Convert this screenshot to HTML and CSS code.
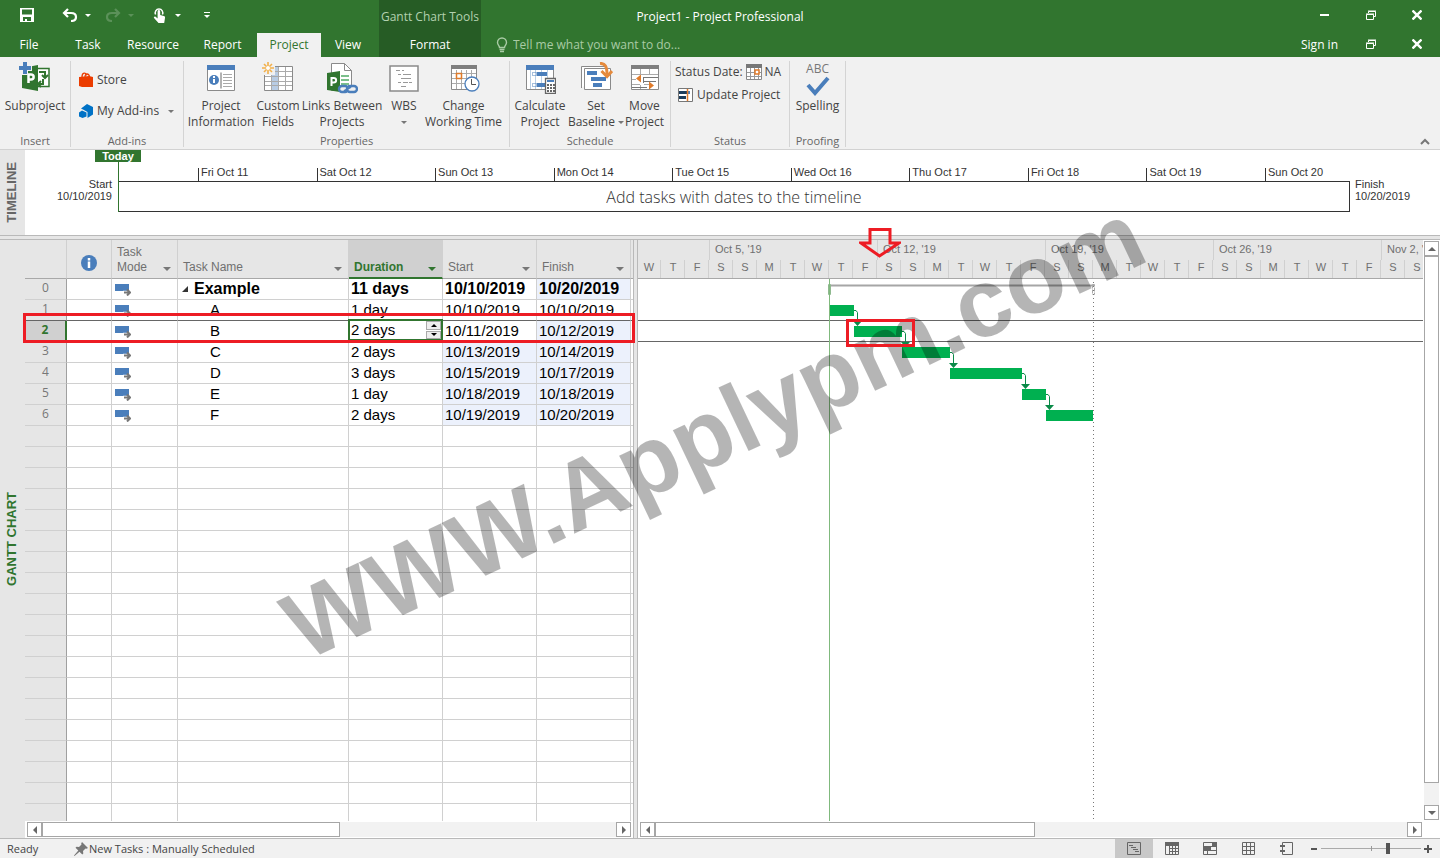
FILE: index.html
```html
<!DOCTYPE html>
<html lang="en">
<head>
<meta charset="utf-8">
<title>Project1 - Project Professional</title>
<link rel="stylesheet" href="styles.css">
</head>
<body>
<header class="titlebar">
  <div class="title-left">
    <div class="qat">
      <button class="qbtn save" aria-label="Save"><svg width="14" height="14" viewBox="0 0 14 14"><path fill="#fff" fill-rule="evenodd" d="M0 0h14v14H0zM2 1.500v5h10v-5zM3 9v4h2v-2h2v2h4V9z"/></svg></button>
      <button class="qbtn undo" aria-label="Undo"><svg width="16" height="14" viewBox="0 0 16 14"><path fill="none" stroke="#fff" stroke-width="2.200" d="M6 1 2 5l4 4M2.500 5H9c3 0 5 1.200 5 4s-2 4-5 4"/></svg></button>
      <button class="qcaret" aria-label="Undo history"><i class="caret light"></i></button>
      <button class="qbtn redo" aria-label="Redo"><svg width="16" height="14" viewBox="0 0 16 14"><path fill="none" stroke="#5b9159" stroke-width="2.200" d="m10 1 4 4-4 4M13.500 5H7C4 5 2 6.200 2 9s2 4 5 4"/></svg></button>
      <button class="qcaret" aria-label="Redo history"><i class="caret faint"></i></button>
      <button class="qbtn touch" aria-label="Touch mode"><svg width="14" height="17" viewBox="0 0 14 17"><path fill="none" stroke="#fff" stroke-width="1.500" d="M2.600 7.500a3.800 3.800 0 1 1 6.800 0"/><path fill="#fff" d="M4.600 4.500c0-2 2.600-2 2.600 0V8l3.600 1c1.200.4 1.400 1 1.200 2l-.8 5H5.500L1 11c-.5-1 .6-2 1.600-1.200l2 1.600z"/></svg></button>
      <button class="qcaret" aria-label="Touch options"><i class="caret light"></i></button>
      <button class="qbtn custom" aria-label="Customize toolbar"><i class="bar"></i><i class="caret light"></i></button>
    </div>
    <div class="context-title">Gantt Chart Tools</div>
  </div>
  <h1 class="title">Project1 - Project Professional</h1>
  <div class="win-controls">
    <button aria-label="Minimize"><svg width="10" height="10"><path stroke="#fff" stroke-width="2" d="M0 5h9"/></svg></button>
    <button aria-label="Restore"><svg width="10" height="10"><path fill="none" stroke="#fff" d="M.5 4.500h7v5h-7zM2.500 3V1.500h7v5H8M2 1h8M0 4h8"/></svg></button>
    <button aria-label="Close"><svg width="10" height="10"><path stroke="#fff" stroke-width="2.400" d="m.5.5 9 9m0-9-9 9"/></svg></button>
  </div>
</header>
<nav class="tabs">
  <a class="tab w-file" href="#file">File</a>
  <a class="tab w-task" href="#task">Task</a>
  <a class="tab w-resource" href="#resource">Resource</a>
  <a class="tab w-report" href="#report">Report</a>
  <a class="tab w-project active" href="#project">Project</a>
  <a class="tab w-view" href="#view">View</a>
  <a class="tab w-format" href="#format">Format</a>
  <label class="tell"><svg width="12" height="16" viewBox="0 0 12 16"><path fill="none" stroke="#a9cba5" stroke-width="1.400" d="M3.500 10.500C3.500 8.500 1.500 8 1.500 5.500a4.500 4.500 0 0 1 9 0c0 2.500-2 3-2 5zM3.500 12.500h5M4 14.500h4"/></svg>
    <input type="text" aria-label="Tell me what you want to do" placeholder="Tell me what you want to do..."></label>
  <a class="signin" href="#signin">Sign in</a>
  <div class="win-controls">
    <button aria-label="Restore document"><svg width="10" height="10"><path fill="none" stroke="#fff" d="M.5 4.500h7v5h-7zM2.500 3V1.500h7v5H8M2 1h8M0 4h8"/></svg></button>
    <button aria-label="Close document"><svg width="10" height="10"><path stroke="#fff" stroke-width="2.400" d="m.5.5 9 9m0-9-9 9"/></svg></button>
  </div>
</nav>
<section class="ribbon">
  <div class="group g-insert">
    <div class="items"><button class="big">
      <svg width="32" height="32" viewBox="0 0 32 32"><path fill="#fff" stroke="#31752f" stroke-width="1.500" d="M16 6.500h14v18H16z"/><path fill="none" stroke="#31752f" stroke-width="2" d="M20 10h6v5m-3-2 3 3 3-3M24 17v5h-4m2-3-3 3 3 3"/><path fill="#31752f" d="m3 6 16-3v26L3 26z"/><path fill="none" stroke="#fff" stroke-width="2.500" d="M9.500 21v-8.500H12c3.500 0 3.500 5 0 5h-2"/><path fill="#f1f1f1" d="M3 0h6v3h4v6H9v4H3z"/><path fill="#4a7ebb" d="M4 0h4v4h4v4H8v4H4V8H0V4h4z"/></svg>
      <span>Subproject</span></button></div>
    <h2>Insert</h2>
  </div>
  <div class="group g-addins">
    <div class="items stack">
      <button class="small"><svg width="16" height="16" viewBox="0 0 16 16"><path fill="none" stroke="#eb3c00" stroke-width="1.300" d="M4 5c0-5 4-5 4.500-1.500M7 5c0-4 4-4 4.500 0"/><path fill="#eb3c00" d="m1 5 10-1 4 1v10H4l-3-1z"/></svg><span>Store</span></button>
      <button class="small"><svg width="16" height="16" viewBox="0 0 16 16"><path fill="#0072c6" d="M3 5.500 9 1l6 3v7.500L9.500 15V9L5 6.500z"/><path fill="#0072c6" d="m4 7.500 4.500 2v4L4.500 15 1 13.500v-4z"/></svg><span>My Add-ins</span><i class="caret"></i></button>
    </div>
    <h2>Add-ins</h2>
  </div>
  <div class="group g-props">
    <div class="items">
      <button class="big">
        <svg width="32" height="32" viewBox="0 0 32 32"><path fill="#fff" stroke="#8a8a8a" d="M2.500 4.500h27v24h-27z"/><path fill="#4a7ebb" d="M2 3h28v5H2z"/><circle cx="9" cy="18" r="5" fill="#4a7ebb"/><path stroke="#fff" stroke-width="2" d="M9 14v2m0 1v4"/><path stroke="#666" d="M16 10.500v16"/><path stroke="#aaa" d="M18 12.500h9m-9 3h9m-9 3h9m-9 3h9m-9 3h9"/></svg>
        <span>Project<br>Information</span></button>
      <button class="big">
        <svg width="32" height="32" viewBox="0 0 32 32"><path fill="#fff" stroke="#8a8a8a" d="M2.500 4.500h28v24h-28z"/><path fill="#b8cce4" d="M9 5h8v23H9z"/><path stroke="#aaa" d="M3 9.500h27m-27 5h27m-27 5h27m-27 4h27M9.500 5v23m7-23v23m7-23v23"/><path fill="#f1f1f1" d="M0 0h13v13H0z"/><path stroke="#f2b04a" stroke-width="1.600" d="M6 0v12M0 6h12M2 2l8 8m0-8-8 8"/><circle cx="6" cy="6" r="2" fill="#fff"/></svg>
        <span>Custom<br>Fields</span></button>
      <button class="big">
        <svg width="32" height="32" viewBox="0 0 32 32"><path fill="#fff" stroke="#8a8a8a" d="M5.500 1.500h13l7 7v20h-20z"/><path fill="none" stroke="#8a8a8a" d="M18.500 1.500v7h7"/><path stroke="#7bbf8b" stroke-width="2" d="M15 14h8m-8 4h8m-8 4h8"/><path fill="#31752f" d="m1 11 13-2v21L1 28z"/><path fill="none" stroke="#fff" stroke-width="2" d="M5.500 24v-8h2c3.500 0 3.500 4.500 0 4.500h-2"/><g fill="#f1f1f1" stroke="#4a7ebb" stroke-width="2.400"><rect x="13" y="24" width="9" height="6" rx="3"/><rect x="21" y="24" width="10" height="6" rx="3"/></g><path stroke="#4a7ebb" stroke-width="2" d="m18 29 7-4"/></svg>
        <span>Links Between<br>Projects</span></button>
      <button class="big">
        <svg width="32" height="32" viewBox="0 0 32 32"><path fill="#fff" stroke="#8a8a8a" stroke-width="1.500" d="M2 4h28v25H2z"/><path stroke="#999" d="M8 8.500h4m2 0h2M10 12.500h3m2 0h8M13 16.500h10M10 20.500h3m2 0h5m1 0h3M13 24.500h5"/></svg>
        <span>WBS<br><i class="caret"></i></span></button>
      <button class="big">
        <svg width="32" height="32" viewBox="0 0 32 32"><path fill="#fff" stroke="#8a8a8a" d="M3.500 4.500h25v23h-25z"/><path fill="#7f7f7f" d="M3 3h26v4H3z"/><path stroke="#aaa" d="M4 11.500h24m-24 5h24m-24 5h24M8.500 8v19m5-19v19m5-19v19m5-19v19"/><path fill="#fff" stroke="#e07b2a" stroke-width="1.500" d="M8.500 11.500h5v5h-5z"/><circle cx="24" cy="22" r="7" fill="#fff" stroke="#4a7ebb" stroke-width="1.300"/><path fill="none" stroke="#555" d="M23.500 17v5.500H28"/></svg>
        <span>Change<br>Working Time</span></button>
    </div>
    <h2>Properties</h2>
  </div>
  <div class="group g-sched">
    <div class="items">
      <button class="big">
        <svg width="32" height="32" viewBox="0 0 32 32"><path fill="#fff" stroke="#8a8a8a" d="M2.500 4.500h27v23h-27z"/><path fill="#4a7ebb" d="M2 3h28v5H2z"/><path stroke="#b9cfe6" d="M6.500 8v19m5-19v19m6-19v19m6-19v19"/><path fill="#4a7ebb" d="M13 10h10v4H13zM13 21h8v4h-8z"/><path fill="none" stroke="#4a7ebb" stroke-dasharray="1 1" d="M8.500 10.500h4v3h-4zm0 11h4v3h-4z"/><path fill="#fff" stroke="#666" stroke-width="1.300" d="M21.500 16.500h10v15h-10z"/><path fill="#4a7ebb" d="M23 18h7v2h-7z"/><path stroke="#666" stroke-width="2" stroke-dasharray="2 1" d="M23 23h8m-8 3h8m-8 3h8"/></svg>
        <span>Calculate<br>Project</span></button>
      <button class="big">
        <svg width="34" height="32" viewBox="0 0 34 32"><path fill="#fff" stroke="#8a8a8a" d="M2.500 26V4.500H26"/><path fill="#fff" stroke="#8a8a8a" d="M5.500 6.500h26v21h-26z"/><path fill="#4a7ebb" d="M8 9h10v4H8zm4 6h15v4H12zm2 6h9v4h-9z"/><path fill="none" stroke="#e58a3c" stroke-width="3" d="M21 1.500c5-.5 7 3 7 11"/><path fill="none" stroke="#e58a3c" stroke-width="3" d="m22.500 9 5.500 5.500L33 9"/></svg>
        <span>Set<br>Baseline <i class="caret"></i></span></button>
      <button class="big">
        <svg width="32" height="32" viewBox="0 0 32 32"><path fill="#fff" stroke="#8a8a8a" d="M2.500 4.500h27v23h-27z"/><path fill="#7f7f7f" d="M2 3h28v4H2z"/><path stroke="#aaa" d="M3 12.500h26m-26 10h8m4 0h6M11.500 7v6m9-6v6m-9 10v4m9-4v4M3 17.500h4"/><path stroke="#777" d="M14 15.500h15M14.500 15v6M14 19.500h13M3 25.500h15"/><path fill="#e07b2a" d="m7 16.500 5-4v8zm18 7-5-4v8z"/></svg>
        <span>Move<br>Project</span></button>
    </div>
    <h2>Schedule</h2>
  </div>
  <div class="group g-status">
    <div class="items status-items">
      <button class="small">Status Date: <svg width="16" height="16" viewBox="0 0 16 16"><path fill="#fff" stroke="#8a8a8a" d="M.5 2.500h15v13H.5z"/><path fill="#777" d="M0 0h16v4H0z"/><path stroke="#999" d="M1 8.500h14M1 12.500h14M4.500 4v11m4-11v11m4-11v11"/><path fill="#fff" stroke="#e07b2a" stroke-width="1.500" d="M9 6h4v4H9z"/></svg> NA</button>
      <button class="small update"><svg width="16" height="15" viewBox="0 0 16 15"><path fill="#fff" stroke="#777" d="M.5.500h14v13H.5z"/><path fill="#1d3d5c" d="M1 3h8v3H1zm0 5h7v3H1z"/><path fill="#4a7ebb" d="M9 3h3v3H9z"/><path stroke="#e07b2a" stroke-width="1.500" d="M9.500 1v12"/></svg> Update Project</button>
    </div>
    <h2>Status</h2>
  </div>
  <div class="group g-proof">
    <div class="items"><button class="big spelling"><b>ABC</b>
      <svg width="24" height="20" viewBox="0 0 24 20"><path fill="none" stroke="#4a7ebb" stroke-width="4" d="m2 9 7 8L22 2"/></svg>
      <span>Spelling</span></button></div>
    <h2>Proofing</h2>
  </div>
  <button class="collapse" aria-label="Collapse the ribbon"><svg width="10" height="7"><path fill="none" stroke="#777" stroke-width="2" d="m1 6 4-4 4 4"/></svg></button>
</section>
<section class="timeline">
  <div class="side"><span>TIMELINE</span></div>
  <div class="tl-start">Start<br>10/10/2019</div>
  <div class="tl-main">
    <span class="today">Today</span>
    <div class="ticks"><span></span><span>Fri Oct 11</span><span>Sat Oct 12</span><span>Sun Oct 13</span><span>Mon Oct 14</span><span>Tue Oct 15</span><span>Wed Oct 16</span><span>Thu Oct 17</span><span>Fri Oct 18</span><span>Sat Oct 19</span><span>Sun Oct 20</span></div>
    <div class="tl-box">Add tasks with dates to the timeline</div>
  </div>
  <div class="tl-finish">Finish<br>10/20/2019</div>
</section>
<svg class="defs" width="0" height="0" aria-hidden="true"><defs>
  <g id="auto"><path fill="#4a7ebb" d="M0 1h14v7H0z"/><path fill="none" stroke="#fff" stroke-width="3.500" d="M8 9.500h7"/><path fill="none" stroke="#777" stroke-width="2" d="M9 9.500h6M12 6.500l3 3-3 3"/></g>
</defs></svg>
<main class="main">
  <div class="side gantt-side"><span>GANTT CHART</span></div>
  <section class="pane sheet-pane">
    <div class="sheet">
      <table>
        <colgroup><col class="c-id"><col class="c-info"><col class="c-mode"><col class="c-name"><col class="c-date"><col class="c-date"><col class="c-date"><col></colgroup>
        <thead><tr>
          <th></th>
          <th class="info"><svg width="16" height="16" viewBox="0 0 16 16"><circle cx="8" cy="8" r="8" fill="#4a7ebb"/><path stroke="#fff" stroke-width="2.500" d="M8 3v2.500M8 6.500V13"/></svg></th>
          <th><div class="h">Task<br>Mode<i class="caret"></i></div></th>
          <th><div class="h">Task Name<i class="caret"></i></div></th>
          <th class="sel"><div class="h">Duration<i class="caret"></i></div></th>
          <th><div class="h">Start<i class="caret"></i></div></th>
          <th><div class="h">Finish<i class="caret"></i></div></th>
          <th></th>
        </tr></thead>
        <tbody>
          <tr class="summary"><th>0</th><td></td><td class="mode"><svg width="16" height="13"><use href="#auto"/></svg></td><td class="root"><svg width="6" height="6"><path fill="#333" d="M6 0v6H0z"/></svg>Example</td><td>11 days</td><td>10/10/2019</td><td class="ch">10/20/2019</td><td></td></tr>
          <tr><th>1</th><td></td><td class="mode"><svg width="16" height="13"><use href="#auto"/></svg></td><td class="name">A</td><td>1 day</td><td>10/10/2019</td><td>10/10/2019</td><td></td></tr>
          <tr class="current"><th>2</th><td></td><td class="mode"><svg width="16" height="13"><use href="#auto"/></svg></td><td class="name">B</td><td class="edit"><div class="editor"><input type="text" aria-label="Duration" value="2 days"><div class="spin"><button aria-label="Increase"><i class="up"></i></button><button aria-label="Decrease"><i class="down"></i></button></div></div></td><td>10/11/2019</td><td class="ch">10/12/2019</td><td></td></tr>
          <tr><th>3</th><td></td><td class="mode"><svg width="16" height="13"><use href="#auto"/></svg></td><td class="name">C</td><td>2 days</td><td class="ch">10/13/2019</td><td class="ch">10/14/2019</td><td></td></tr>
          <tr><th>4</th><td></td><td class="mode"><svg width="16" height="13"><use href="#auto"/></svg></td><td class="name">D</td><td>3 days</td><td class="ch">10/15/2019</td><td class="ch">10/17/2019</td><td></td></tr>
          <tr><th>5</th><td></td><td class="mode"><svg width="16" height="13"><use href="#auto"/></svg></td><td class="name">E</td><td>1 day</td><td class="ch">10/18/2019</td><td class="ch">10/18/2019</td><td></td></tr>
          <tr><th>6</th><td></td><td class="mode"><svg width="16" height="13"><use href="#auto"/></svg></td><td class="name">F</td><td>2 days</td><td class="ch">10/19/2019</td><td class="ch">10/20/2019</td><td></td></tr>
          <tr><th></th><td></td><td></td><td></td><td></td><td></td><td></td><td></td></tr>
          <tr><th></th><td></td><td></td><td></td><td></td><td></td><td></td><td></td></tr>
          <tr><th></th><td></td><td></td><td></td><td></td><td></td><td></td><td></td></tr>
          <tr><th></th><td></td><td></td><td></td><td></td><td></td><td></td><td></td></tr>
          <tr><th></th><td></td><td></td><td></td><td></td><td></td><td></td><td></td></tr>
          <tr><th></th><td></td><td></td><td></td><td></td><td></td><td></td><td></td></tr>
          <tr><th></th><td></td><td></td><td></td><td></td><td></td><td></td><td></td></tr>
          <tr><th></th><td></td><td></td><td></td><td></td><td></td><td></td><td></td></tr>
          <tr><th></th><td></td><td></td><td></td><td></td><td></td><td></td><td></td></tr>
          <tr><th></th><td></td><td></td><td></td><td></td><td></td><td></td><td></td></tr>
          <tr><th></th><td></td><td></td><td></td><td></td><td></td><td></td><td></td></tr>
          <tr><th></th><td></td><td></td><td></td><td></td><td></td><td></td><td></td></tr>
          <tr><th></th><td></td><td></td><td></td><td></td><td></td><td></td><td></td></tr>
          <tr><th></th><td></td><td></td><td></td><td></td><td></td><td></td><td></td></tr>
          <tr><th></th><td></td><td></td><td></td><td></td><td></td><td></td><td></td></tr>
          <tr><th></th><td></td><td></td><td></td><td></td><td></td><td></td><td></td></tr>
          <tr><th></th><td></td><td></td><td></td><td></td><td></td><td></td><td></td></tr>
          <tr><th></th><td></td><td></td><td></td><td></td><td></td><td></td><td></td></tr>
          <tr><th></th><td></td><td></td><td></td><td></td><td></td><td></td><td></td></tr>
        </tbody>
      </table>
    </div>
    <div class="hscroll"><button aria-label="Scroll left"><i class="left"></i></button><div class="track"><div class="thumb sheet-thumb"></div></div><button aria-label="Scroll right"><i class="right"></i></button></div>
    <div class="mark-row"></div>
  </section>
  <div class="splitter"></div>
  <section class="pane chart-pane">
    <div class="scale">
      <div class="weeks"><span class="lead"></span><span>Oct 5, '19</span><span>Oct 12, '19</span><span>Oct 19, '19</span><span>Oct 26, '19</span><span>Nov 2, '</span></div>
      <div class="days"><span>W</span><span>T</span><span>F</span><span>S</span><span>S</span><span>M</span><span>T</span><span>W</span><span>T</span><span>F</span><span>S</span><span>S</span><span>M</span><span>T</span><span>W</span><span>T</span><span>F</span><span>S</span><span>S</span><span>M</span><span>T</span><span>W</span><span>T</span><span>F</span><span>S</span><span>S</span><span>M</span><span>T</span><span>W</span><span>T</span><span>F</span><span>S</span><span>S</span></div>
    </div>
    <svg class="canvas" width="100%" height="100%">
      <path stroke="#a6a6a6" stroke-width="2" d="M191 6.500h265"/>
      <path fill="none" stroke="#8fb98f" d="M190.500 5.500h2v10h-2z"/>
      <path fill="none" stroke="#aaa" stroke-dasharray="4 1" d="M454.500 5.500h2v10h-2z"/>
      <line x1="0" x2="100%" y1="41.500" y2="41.500" stroke="#666"/>
      <line x1="0" x2="100%" y1="62.500" y2="62.500" stroke="#666"/>
      <line x1="191.500" x2="191.500" y1="0" y2="100%" stroke="#80b97d"/>
      <line x1="455.500" x2="455.500" y1="3" y2="100%" stroke="#777" stroke-dasharray="1 3"/>
      <g fill="#00b050"><path d="M192 26h24v11h-24zM216 47h48v11h-48zM264 68h48v11h-48zM312 89h72v11h-72zM384 110h24v11h-24zM408 131h47v11h-47z"/></g>
      <g fill="none" stroke="#0a8a48"><path d="M216 31.500h2l1.500 2V46M264 52.500h2l1.500 2V67M312 73.500h2l1.500 2V88M384 94.500h2l1.500 2V109M408 115.500h2l1.500 2V130"/></g>
      <g fill="#0a8a48"><path d="M215 42h9l-4.500 5zM263 63h9l-4.500 5zM311 84h9l-4.500 5zM383 105h9l-4.500 5zM407 126h9l-4.500 5z"/></g>
    </svg>
    <div class="hscroll"><button aria-label="Scroll chart left"><i class="left"></i></button><div class="track"><div class="thumb chart-thumb"></div></div><button aria-label="Scroll chart right"><i class="right"></i></button></div>
    <svg class="mark-arrow" width="42" height="30"><path fill="none" stroke="#ed1c24" stroke-width="3" d="M11 1.500h20V15h9L20.500 28 2 15h9z"/></svg>
    <div class="mark-bar"></div>
  </section>
  <div class="vscroll"><button aria-label="Scroll up"><i class="up"></i></button><div class="vtrack"><div class="vthumb"></div></div><button aria-label="Scroll down"><i class="down"></i></button></div>
</main>
<footer class="statusbar">
  <span class="ready">Ready</span>
  <button class="newtasks"><svg width="14" height="14" viewBox="0 0 14 14"><path fill="#777" d="m8 0 6 6-1.500.8-1-.3-2.500 2.500.3 2.500-1 1L5.500 9.700.5 14l-.5-.5 4.300-5L1.500 5.700l1-1L5 5l2.500-2.500-.3-1z"/></svg>New Tasks : Manually Scheduled</button>
  <div class="views">
    <button class="on" aria-label="Gantt Chart"><svg width="14" height="13"><path fill="none" stroke="#666" d="M.5.500h13v12H.5zM2 3.500h4M4 5.500h5M6 7.500h5M8 9.500h4"/></svg></button>
    <button aria-label="Task Usage"><svg width="14" height="13"><path fill="none" stroke="#666" d="M.5.500h13v12H.5zM4.500 3v9M7.500 3v9M10.500 3v9M5 6.500h9M5 9.500h9"/><path fill="#666" d="M0 0h14v4H0z"/></svg></button>
    <button aria-label="Team Planner"><svg width="14" height="13"><path fill="none" stroke="#666" d="M.5.500h13v12H.5zM0 4.500h14M0 8.500h14M4.500 8v5"/><path fill="#666" d="M9 0h5v4H9zM0 5h8v3H0z"/></svg></button>
    <button aria-label="Resource Sheet"><svg width="13" height="13"><path fill="none" stroke="#666" d="M.5.500h12v12H.5zM4.500 0v13M8.500 0v13M0 4.500h13M0 8.500h13"/></svg></button>
    <button aria-label="Report"><svg width="13" height="13"><path fill="none" stroke="#666" d="M2.500 3V.5h10v12h-10V10M2.500 5v3"/><path stroke="#666" stroke-width="2" d="M0 4h5M0 9h5"/></svg></button>
  </div>
  <div class="zoom">
    <button aria-label="Zoom out"><svg width="8" height="8"><path stroke="#555" stroke-width="2" d="M1 4h6"/></svg></button>
    <input type="range" aria-label="Zoom" min="0" max="100" value="68">
    <button aria-label="Zoom in"><svg width="8" height="8"><path stroke="#555" stroke-width="2" d="M0 4h8M4 0v8"/></svg></button>
  </div>
</footer>
<div class="watermark"><span>WWW.Applypm.com</span></div>
</body>
</html>
```

FILE: styles.css
```css
* { box-sizing: border-box; }
body {
  margin: 0;
  height: 100vh;
  display: flex;
  flex-direction: column;
  overflow: hidden;
  background: #fff;
  color: #444;
  font: 12px/16px "Open Sans", "Noto Sans", sans-serif;
}
button { margin: 0; padding: 0; border: 0; background: none; color: inherit; font: inherit; }
button svg, i { display: block; flex: none; }
a { color: inherit; text-decoration: none; }
h1, h2 { margin: 0; font: inherit; }
.defs { position: absolute; }

.caret { width: 0; height: 0; border: 3px solid transparent; border-top-color: #777; border-bottom: 0; }
.caret.light { border-top-color: #fff; }
.caret.faint { border-top-color: #5b9159; }
.up, .down, .left, .right { width: 0; height: 0; border: 4px solid transparent; }
.up { border-bottom-color: #666; border-top: 0; }
.down { border-top-color: #666; border-bottom: 0; }
.left { border-right-color: #666; border-left: 0; }
.right { border-left-color: #666; border-right: 0; }

/* title bar */
.titlebar {
  flex: none;
  height: 33px;
  display: grid;
  grid-template-columns: 1fr auto 1fr;
  align-items: center;
  background: #31752f;
  color: #fff;
}
.title-left { display: flex; align-self: stretch; }
.qat { width: 379px; padding-bottom: 4px; display: flex; align-items: center; }
.qbtn { width: 28px; display: flex; flex-direction: column; align-items: center; }
.save { margin-left: 13px; }
.undo { margin-left: 15px; }
.redo { margin-left: 7px; }
.touch { margin-left: 11px; }
.custom { margin-left: 11px; gap: 2px; }
.custom .bar { width: 6px; height: 1px; background: #fff; }
.qcaret { width: 8px; display: flex; justify-content: center; }
.context-title {
  width: 102px;
  background: #265c25;
  color: #b3d1b0;
  line-height: 34px;
  text-align: center;
  white-space: nowrap;
}
.win-controls { display: flex; justify-content: flex-end; }
.titlebar .win-controls { align-self: start; }
.win-controls button { width: 46px; height: 30px; display: flex; align-items: center; justify-content: center; }

/* tabs */
.tabs { flex: none; height: 24px; display: flex; align-items: stretch; background: #31752f; color: #fff; line-height: 24px; }
.tabs .win-controls button { height: 22px; }
.tab { text-align: center; }
.w-file { width: 58px; }
.w-task { width: 60px; }
.w-resource { width: 70px; }
.w-report { width: 69px; }
.w-project { width: 64px; }
.w-view { width: 54px; }
.w-format { width: 102px; margin-left: 4px; background: #265c25; }
.tab.active { background: #f1f1f1; color: #31752f; }
.tell { flex: 1; display: flex; align-items: center; gap: 5px; padding-left: 15px; }
.tell input { flex: 1; min-width: 0; padding: 0; border: 0; background: none; color: #fff; font: inherit; }
.tell input::placeholder { color: #a9cba5; opacity: 1; }
.signin { margin-right: 10px; }

/* ribbon */
.ribbon { flex: none; height: 93px; display: flex; padding: 4px 0 2px; background: #f1f1f1; border-bottom: 1px solid #d2d2d2; }
.group { display: flex; flex-direction: column; border-right: 1px solid #d4d4d4; }
.group h2 { color: #666; text-align: center; font-size: 11px; line-height: 12px; }
.items { flex: 1; display: flex; align-items: flex-start; }
.g-insert { width: 71px; }
.g-addins { width: 113px; }
.g-props { width: 326px; }
.g-sched { width: 161px; }
.g-status { width: 119px; }
.g-proof { width: 56px; }
.big { flex: 1; display: flex; flex-direction: column; align-items: center; white-space: nowrap; padding-top: 1px; line-height: 16px; }
.big span { margin-top: 4px; }
.big i { display: inline-block; vertical-align: middle; }
.g-props .items { display: grid; grid-template-columns: 72px 42px 86px 38px 1fr; padding: 0 5px 0 1px; }
.g-sched .items { display: grid; grid-template-columns: 60px 52px 1fr; padding-right: 3px; }
.stack { flex-direction: column; gap: 15px; padding: 11px 0 0 7px; }
.small { display: flex; align-items: center; gap: 3px; white-space: nowrap; }
.stack .caret { margin-left: 6px; }
.status-items { flex-direction: column; gap: 7px; padding: 3px 0 0 4px; }
.update { margin-left: 3px; }
.spelling b { color: #777; font-weight: 400; line-height: 14px; }
.spelling span { margin-top: 2px; }
.collapse { margin-left: auto; padding: 0 10px 2px 0; align-self: flex-end; }

/* timeline */
.timeline {
  flex: none;
  height: 86px;
  display: grid;
  grid-template-columns: 25px 93px 1fr 90px;
  border-bottom: 1px solid #b9b9b9;
  color: #333;
  font: 11px/12px "Liberation Sans", sans-serif;
}
.side { background: #e6e6e6; display: flex; align-items: center; justify-content: center; padding-right: 2px; }
.side span { writing-mode: vertical-rl; transform: rotate(180deg); font: bold 13px/16px "Liberation Sans", sans-serif; color: #666; }
.gantt-side span { color: #31752f; }
.tl-start { padding: 28px 6px 0 0; text-align: right; }
.tl-finish { padding: 28px 0 0 5px; }
.tl-main { position: relative; border-left: 1px solid #31752f; margin-bottom: 23px; padding-top: 18px; }
.today {
  position: absolute;
  top: 0;
  left: -24px;
  width: 46px;
  background: #31752f;
  color: #fff;
  font-weight: bold;
  text-align: center;
}
.ticks { display: grid; grid-template-columns: 790fr repeat(9, 1186fr) 850fr; }
.ticks span { min-width: 0; height: 13px; line-height: 9px; padding-left: 2px; white-space: nowrap; }
.ticks span + span { border-left: 1px solid #333; }
.tl-box {
  height: 31px;
  border: 1px solid #333;
  border-left: 0;
  text-align: center;
  font: 300 16px/30px "Open Sans", sans-serif;
}

/* main area */
.main { flex: 1; min-height: 0; display: flex; margin-top: 3px; border-top: 1px solid #b9b9b9; box-shadow: 0 -3px #e6e6e6; }
.side { width: 25px; flex: none; }
.pane { position: relative; display: flex; flex-direction: column; min-height: 0; }
.sheet-pane { width: 608px; flex: none; }
.chart-pane { flex: 1; min-width: 0; }
.splitter { width: 5px; flex: none; background: #e6e6e6; border: solid #b9b9b9; border-width: 0 1px; }
.sheet { flex: 1; min-height: 0; overflow: hidden; }
table { width: 100%; border-collapse: separate; border-spacing: 0; table-layout: fixed; font: 15px/20px "Liberation Sans", sans-serif; color: #000; }
.c-id { width: 42px; }
.c-info { width: 45px; }
.c-mode { width: 66px; }
.c-name { width: 171px; }
.c-date { width: 94px; }
th, td { height: 21px; padding: 0 0 0 2px; border: solid #d0d0d0; border-width: 0 1px 1px 0; white-space: nowrap; text-align: left; }
td { line-height: 20px; }
tr > :last-child { border-right: 0; padding: 0; }
thead th { height: 39px; padding: 0 5px; background: #e6e6e6; border-bottom-color: #a8a8a8; vertical-align: bottom; font: 12px/15px "Liberation Sans", sans-serif; color: #707070; }
thead th.info { padding: 0 0 7px; text-align: center; }
.info svg { display: block; margin: 0 auto; }
.h { position: relative; padding-bottom: 3px; }
.h .caret { position: absolute; right: 1px; bottom: 7px; border-width: 4px 4px 0; }
thead th.sel { background: #d0d0d0; border-bottom: 2px solid #31752f; color: #31752f; font-weight: bold; }
.sel .h { padding-bottom: 2px; }
.sel .caret { border-top-color: #31752f; bottom: 6px; }
tbody th { background: #e6e6e6; border-right-color: #a0a0a0; padding: 0; text-align: center; color: #777; font: 12px/18px "Open Sans", sans-serif; vertical-align: top; }
.summary td { font-weight: bold; font-size: 16px; }
td.mode { padding-left: 3px; }
.mode svg { display: block; }
td.root { padding-left: 4px; }
.root svg { margin-right: 6px; vertical-align: 2px; }
td.name { padding-left: 32px; }
.ch { background: #ecf1fc; }
.current th { background: #d0d0d0; color: #31752f; font-weight: bold; border-right: 2px solid #31752f; }
.current > * { border-bottom-color: #666; }
tr:nth-child(2) > * { border-bottom-color: #666; }
thead tr > * { border-bottom-color: #a8a8a8; }
td.edit { padding: 0; }
.editor { display: flex; height: 22px; margin: -2px -1px 0; border: 2px solid #31752f; }
.editor input { flex: 1; min-width: 0; padding: 0 0 0 1px; border: 0; background: none; font: inherit; color: inherit; }
.spin { width: 15px; display: flex; flex-direction: column; gap: 1px; }
.spin button { flex: 1; display: flex; align-items: center; justify-content: center; background: #eee; border: 1px solid #aaa; }
.spin .up, .spin .down { border-width: 3px; }
.spin .up { border-top: 0; border-bottom-color: #000; }
.spin .down { border-bottom: 0; border-top-color: #000; }

/* scroll bars */
.hscroll { flex: none; height: 17px; display: flex; padding: 1px 2px; }
.hscroll button, .vscroll button { width: 15px; height: 15px; flex: none; border: 1px solid #a6a6a6; background: #fff; display: flex; align-items: center; justify-content: center; }
.track { flex: 1; background: #f2f2f2; }
.thumb { height: 15px; background: #fff; border: 1px solid #a6a6a6; }
.sheet-thumb { width: 52%; }
.chart-thumb { width: 50.5%; }
.chart-pane .hscroll { padding-right: 1px; }
.vscroll { width: 17px; flex: none; display: flex; flex-direction: column; padding: 1px 1px 18px; }
.vtrack { flex: 1; width: 15px; background: #f2f2f2; }
.vthumb { height: 96%; background: #fff; border: 1px solid #a6a6a6; }

/* chart */
.scale { flex: none; height: 39px; overflow: hidden; background: #e6e6e6; border-bottom: 1px solid #a8a8a8; color: #707070; font: 11px/18px "Liberation Sans", sans-serif; }
.weeks, .days { display: flex; white-space: nowrap; margin-left: -1px; }
.weeks span { flex: none; width: 168px; height: 20px; padding-left: 5px; border-left: 1px solid #d0d0d0; }
.weeks .lead { width: 72px; border: 0; }
.days { height: 18px; line-height: 14px; }
.days span { flex: none; width: 24px; padding-left: 1px; text-align: center; border-right: 1px solid #d0d0d0; }
.canvas { flex: 1; min-height: 0; display: block; }

/* annotations */
.mark-row, .mark-bar { position: absolute; z-index: 3; border: 3px solid #ed1c24; pointer-events: none; }
.mark-row { top: 73px; left: -2px; right: -2px; height: 30px; }
.mark-bar { top: 79px; left: 208px; width: 69px; height: 28px; }
.mark-arrow { position: absolute; z-index: 3; top: -12px; left: 221px; }
.watermark {
  position: fixed;
  inset: 0;
  z-index: 2;
  display: flex;
  align-items: center;
  justify-content: center;
  padding: 4px 12px 0 0;
  overflow: hidden;
  pointer-events: none;
  color: rgba(0, 0, 0, .29);
  font: bold 97px/110px "Liberation Sans", sans-serif;
}
.watermark span { transform: rotate(-25.4deg); white-space: nowrap; }

/* status bar */
.statusbar { flex: none; height: 20px; display: flex; align-items: center; background: #f1f1f1; border-top: 1px solid #b9b9b9; font-size: 11px; }
.ready { width: 74px; padding-left: 7px; }
.newtasks { display: flex; align-items: center; gap: 1px; }
.views { margin-left: auto; display: flex; align-self: stretch; }
.views button { width: 38px; display: flex; align-items: center; justify-content: center; }
.views .on { background: #c8c8c8; }
.zoom { display: flex; align-items: center; gap: 3px; padding: 0 8px 0 5px; }
.zoom input {
  appearance: none;
  width: 100px;
  height: 11px;
  margin: 0;
  background: linear-gradient(#999, #999) 50px 3px / 1px 5px no-repeat, linear-gradient(#aaa, #aaa) 0 5px / 100% 1px no-repeat;
}
.zoom input::-webkit-slider-thumb { appearance: none; width: 4px; height: 11px; background: #555; }
```
